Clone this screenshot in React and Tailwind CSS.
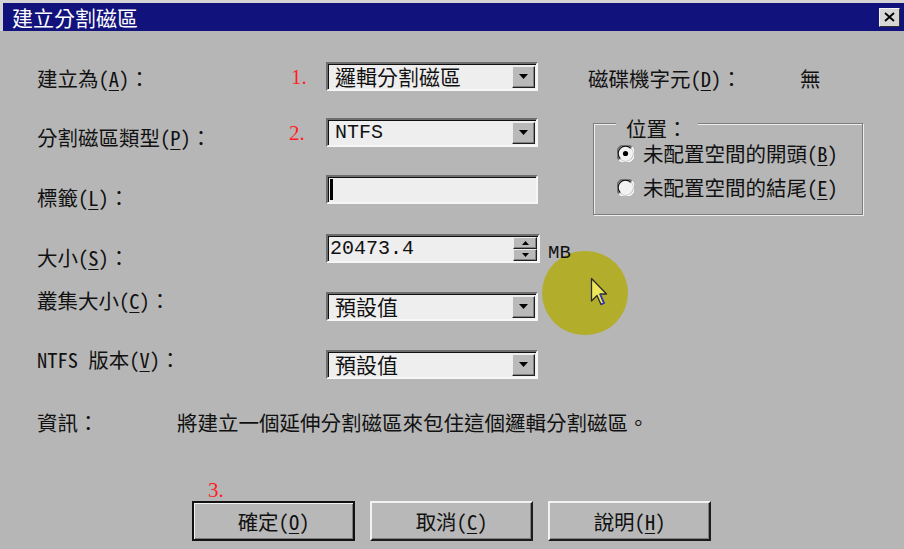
import clsx from "clsx"

const mono = "font-['Liberation_Mono','Noto_Sans_CJK_TC',monospace]"
const serif = "font-['Liberation_Serif',serif]"

const Mn = ({ children }) => (
  <span className="underline underline-offset-[3px] decoration-1">{children}</span>
)

const Label = ({ children, className }) => (
  <div className={clsx("h-[28px] leading-[28px] whitespace-nowrap", className)}>{children}</div>
)

const Marker = ({ children, className }) => (
  <span className={clsx("w-[37px] text-[21px] leading-[28px] text-[#ff1e1e]", serif, className)}>
    {children}
  </span>
)

const sunken =
  "bg-[#eeeeee] border-2 border-t-[#6e6e6e] border-l-[#6e6e6e] border-b-[#f6f6f6] border-r-[#f6f6f6] shadow-[inset_1px_1px_0_#101010]"

const raised =
  "bg-[#b9b9b9] border border-t-[#ececec] border-l-[#ececec] border-b-[#202020] border-r-[#202020] shadow-[inset_-1px_-1px_0_#808080]"

const Tri = ({ up, big }) =>
  big ? (
    <svg width="9" height="5" viewBox="0 0 9 5">
      <path d="M0 0 L9 0 L4.5 5 Z" fill="#000" />
    </svg>
  ) : (
    <svg width="7" height="4" viewBox="0 0 7 4">
      <path d={up ? "M0 4 L3.5 0 L7 4 Z" : "M0 0 L7 0 L3.5 4 Z"} fill="#000" />
    </svg>
  )

const Combo = ({ value, latin }) => (
  <div className={clsx("flex items-center w-[212px] h-[29px]", sunken)}>
    <span className={clsx("flex-1 pl-[7px] leading-[25px] whitespace-nowrap", latin ? clsx(mono, "text-[20px]") : "text-[21px]")}>
      {value}
    </span>
    <div className={clsx("w-[23px] h-[22px] mr-[1px] flex items-center justify-center", raised)}>
      <Tri big />
    </div>
  </div>
)

const Button = ({ children, primary }) => (
  <div
    className={clsx(
      "w-[163px] h-[40px] flex items-center justify-center text-[20.5px] bg-[#b8b8b8]",
      primary
        ? "border-2 border-[#111] shadow-[inset_1px_1px_0_#f2f2f2,inset_-1px_-1px_0_#7a7a7a]"
        : "border-2 border-t-[#f2f2f2] border-l-[#f2f2f2] border-b-[#1c1c1c] border-r-[#1c1c1c] shadow-[inset_-1px_-1px_0_#808080]"
    )}
  >
    {children}
  </div>
)

const Radio = ({ checked }) => (
  <svg width="17" height="17" viewBox="0 0 17 17">
    <circle cx="8.5" cy="8.5" r="7.5" fill="#f2f2f2" />
    <path d="M2.2 14.8 A7.5 7.5 0 0 1 14.8 2.2" fill="none" stroke="#707070" strokeWidth="1.4" />
    <path d="M3.3 13.7 A6 6 0 0 1 13.7 3.3" fill="none" stroke="#111" strokeWidth="1.2" />
    <path d="M14.8 2.2 A7.5 7.5 0 0 1 2.2 14.8" fill="none" stroke="#fafafa" strokeWidth="1.4" />
    {checked && <circle cx="8.5" cy="8.5" r="2.6" fill="#000" />}
  </svg>
)

const App = () => {
  return (
    <div className="relative w-[904px] h-[549px] overflow-hidden bg-[#b6b6b6] text-[#111] text-[20.5px] font-['Noto_Sans_Mono_CJK_TC','Noto_Sans_CJK_TC',sans-serif]">
      {/* title bar */}
      <div className="bg-[#d4d4d4] pt-[3px] pl-[3px]">
        <div className="h-[28px] bg-[#12127c] flex items-center justify-between pl-[9px] pr-[4px]">
          <span className="text-white text-[21px] leading-[28px]">建立分割磁區</span>
          <div className="w-[21px] h-[19px] bg-[#d6d6d6] border border-t-[#f4f4f4] border-l-[#f4f4f4] border-b-[#303030] border-r-[#303030] flex items-center justify-center">
            <svg width="11" height="10" viewBox="0 0 11 10">
              <path d="M1 1 L10 9 M10 1 L1 9" stroke="#000" strokeWidth="1.8" />
            </svg>
          </div>
        </div>
      </div>

      <div className="flex">
        {/* labels */}
        <div className="w-[289px] pl-[37px] pt-[33px] flex flex-col">
          <Label>建立為(<Mn>A</Mn>)：</Label>
          <Label className="mt-[31px]">分割磁區類型(<Mn>P</Mn>)：</Label>
          <Label className="mt-[32px]">標籤(<Mn>L</Mn>)：</Label>
          <Label className="mt-[32px]">大小(<Mn>S</Mn>)：</Label>
          <Label className="mt-[15px]">叢集大小(<Mn>C</Mn>)：</Label>
          <Label className="mt-[31px]">NTFS 版本(<Mn>V</Mn>)：</Label>
        </div>

        {/* fields */}
        <div className="w-[299px] pt-[31px] flex flex-col">
          <div className="flex items-center">
            <Marker className="pl-[2px]">1.</Marker>
            <Combo value="邏輯分割磁區" />
          </div>
          <div className="flex items-center mt-[27px]">
            <Marker>2.</Marker>
            <Combo value="NTFS" latin />
          </div>
          <div className="flex items-center mt-[28px] pl-[37px]">
            <div className={clsx("w-[212px] h-[29px] flex items-center", sunken)}>
              <div className="ml-[2px] w-[3px] h-[21px] bg-black" />
            </div>
          </div>
          <div className="flex items-start mt-[30px] pl-[37px]">
            <div className={clsx("w-[214px] h-[29px] flex items-center", sunken)}>
              <span className={clsx("flex-1 pl-[2px] text-[20px] leading-[25px]", mono)}>20473.4</span>
              <div className="flex flex-col mr-[1px]">
                <div className={clsx("w-[24px] h-[12px] flex items-center justify-center", raised)}>
                  <Tri up />
                </div>
                <div className={clsx("w-[24px] h-[12px] flex items-center justify-center", raised)}>
                  <Tri />
                </div>
              </div>
            </div>
            <span className={clsx("relative z-10 ml-[8px] mt-[9px] text-[19px] leading-[20px]", mono)}>MB</span>
          </div>
          <div className="flex items-center mt-[29px] pl-[37px]">
            <Combo value="預設值" />
          </div>
          <div className="flex items-center mt-[29px] pl-[37px]">
            <Combo value="預設值" />
          </div>
        </div>

        {/* right side */}
        <div className="pt-[33px] flex flex-col">
          <div className="flex h-[28px] leading-[28px] whitespace-nowrap">
            <span className="w-[212px]">磁碟機字元(<Mn>D</Mn>)：</span>
            <span>無</span>
          </div>
          <div className="mt-[31px] ml-[5px] w-[270px] h-[92px] flex flex-col border border-[#7c7c7c] shadow-[inset_1px_1px_0_#eeeeee,1px_1px_0_#eeeeee]">
            <span className="-mt-[7px] ml-[22px] px-[10px] self-start bg-[#b6b6b6] leading-[22px]">位置：</span>
            <div className="flex items-center h-[26px] mt-[1px] pl-[23px] gap-[9px] whitespace-nowrap leading-[24px]">
              <Radio checked />
              <span>未配置空間的開頭(<Mn>B</Mn>)</span>
            </div>
            <div className="flex items-center h-[26px] mt-[8px] pl-[23px] gap-[9px] whitespace-nowrap leading-[24px]">
              <Radio />
              <span>未配置空間的結尾(<Mn>E</Mn>)</span>
            </div>
          </div>
        </div>
      </div>

      {/* info */}
      <div className="mt-[29px] pl-[37px] flex h-[28px] leading-[28px] whitespace-nowrap">
        <span className="w-[140px]">資訊：</span>
        <span>將建立一個延伸分割磁區來包住這個邏輯分割磁區。</span>
      </div>

      {/* buttons */}
      <div className={clsx("mt-[44px] pl-[208px] h-[20px] leading-[20px] text-[21px] text-[#ff1e1e]", serif)}>3.</div>
      <div className="mt-[1px] pl-[192px] flex gap-[15px]">
        <Button primary>確定(<Mn>O</Mn>)</Button>
        <Button>取消(<Mn>C</Mn>)</Button>
        <Button>說明(<Mn>H</Mn>)</Button>
      </div>

      {/* highlight circle + cursor over the dialog */}
      <div className="absolute left-[542px] top-[251px] w-[86px] h-[84px] rounded-full bg-[#b3ad2c]" />
      <svg className="absolute left-[590px] top-[277px]" width="18" height="30" viewBox="0 0 18 30">
        <path d="M1.5 1.5 L1.5 24 L7 18.5 L11 27.5 L14 26 L10 17 L16.5 17 Z" fill="#ece65a" stroke="#2c2c2c" strokeWidth="1.3" strokeLinejoin="round" />
        <path d="M10 17 L14 26 L11 27.5" fill="none" stroke="#3434c8" strokeWidth="1.6" />
      </svg>
    </div>
  )
}

export default App
